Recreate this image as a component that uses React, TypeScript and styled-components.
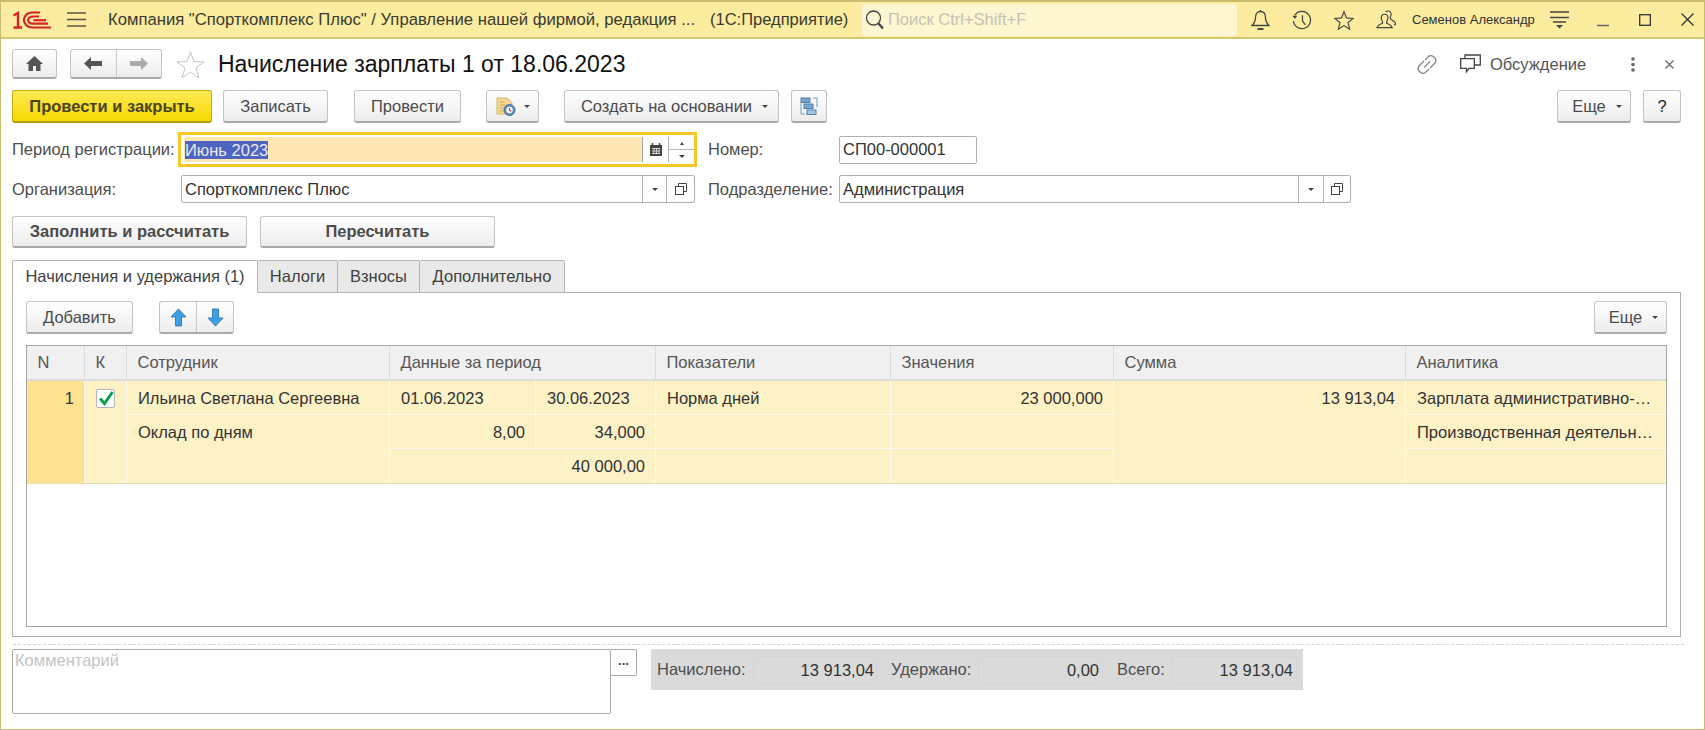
import React from "react";
import styled, { createGlobalStyle } from "styled-components";

const Global = createGlobalStyle`
  html, body { margin: 0; padding: 0; background: #fff; }
  body { font-family: "Liberation Sans", Arial, sans-serif; font-size: 16.5px; color: #333; }
  * { box-sizing: border-box; }
`;

const Root = styled.div`
  width: 1705px; height: 730px; overflow: hidden; background: #fff;
  border: 1px solid #c9bc6e; border-top-width: 2px;
  display: flex; flex-direction: column;
`;
const TopBar = styled.header`
  height: 37px; flex: none; background: #fbec9f; border-bottom: 2px solid #d4c670;
  display: flex; align-items: center; color: #333;
`;
const LogoBox = styled.div`margin-left: 12px; width: 38px; height: 18px; display: flex;`;
const Burger = styled.div`margin-left: 16px; display: flex;`;
const AppTitle = styled.div`margin-left: 22px; width: 589px; font-size: 16.67px; white-space: nowrap; color: #3a3a30;`;
const AppKind = styled.div`margin-left: 13px; width: 139px; font-size: 16.5px; white-space: nowrap; color: #3a3a30;`;
const SearchBox = styled.div`
  margin-left: 13px; width: 375px; height: 32px; background: #fdf6d0; border-radius: 3px;
  display: flex; align-items: center; padding-left: 3px; color: #c5c3b4; font-size: 16.5px; gap: 3px;
`;
const TopIcon = styled.div<{ $ml: number; $w?: number }>`
  margin-left: ${(p) => p.$ml}px; width: ${(p) => p.$w ?? 20}px; display: flex; justify-content: center; align-items: center;
`;
const UserName = styled.div`margin-left: 16px; width: 124px; font-size: 13px; white-space: nowrap; color: #333;`;

const Form = styled.main`flex: 1; display: flex; flex-direction: column; padding: 0 23px 0 11px; min-height: 0;`;
const TitleRow = styled.div`margin-top: 10px; height: 30px; display: flex; align-items: center;`;
const Btn = styled.button<{ $w: number; $ml?: number; $primary?: boolean; $bold?: boolean; $h?: number; $dark?: boolean }>`
  width: ${(p) => p.$w}px; height: ${(p) => p.$h ?? 33}px; margin-left: ${(p) => p.$ml ?? 0}px; flex: none; padding: 0;
  display: inline-flex; align-items: center; justify-content: center; gap: 8px;
  font-family: "Liberation Sans", Arial, sans-serif; font-size: 16.5px;
  font-weight: ${(p) => (p.$primary || p.$bold ? 700 : 400)};
  color: ${(p) => (p.$primary ? "#4a4320" : p.$dark ? "#222" : "#4b4b4b")};
  border-radius: 3px;
  border: 1px solid ${(p) => (p.$primary ? "#c8ab0c" : "#c4c4c4")};
  border-bottom: 2px solid ${(p) => (p.$primary ? "#b49a10" : "#a9a9a9")};
  background: ${(p) => (p.$primary ? "linear-gradient(#ffea55, #f6d800)" : "linear-gradient(#ffffff, #ececec)")};
`;
const MenuBtn = styled(Btn)`gap: 10px; padding-left: 6px;`;
const SegGroup = styled.div<{ $w: number; $ml?: number; $h: number }>`
  width: ${(p) => p.$w}px; height: ${(p) => p.$h}px; margin-left: ${(p) => p.$ml ?? 0}px; flex: none; display: flex;
  border-radius: 3px; border: 1px solid #c4c4c4; border-bottom: 2px solid #a9a9a9;
  background: linear-gradient(#ffffff, #ececec);
`;
const SegItem = styled.div`
  flex: 1; display: flex; align-items: center; justify-content: center;
  & + & { border-left: 1px solid #c9c9c9; }
`;
const StarBox = styled.div`margin-left: 14px; width: 29px; display: flex;`;
const Title = styled.h1`margin: 0 0 0 13px; font-size: 23px; font-weight: 400; color: #111; white-space: nowrap;`;
const TitleRight = styled.div`margin-left: auto; display: flex; align-items: center; color: #4a5a6a;`;
const Discuss = styled.span`margin-left: 9px; width: 99px; font-size: 16.5px; white-space: nowrap; color: #555;`;

const CommandBar = styled.div`margin-top: 11px; height: 33px; display: flex; flex: none;`;
const Caret = styled.span`
  width: 0; height: 0; border-left: 3px solid transparent; border-right: 3px solid transparent; border-top: 3px solid #444; flex: none;
`;
const Push = styled.div`margin-left: auto; display: flex;`;

const FieldRow = styled.div<{ $mt: number; $h: number }>`
  margin-top: ${(p) => p.$mt}px; height: ${(p) => p.$h}px; display: flex; align-items: center; flex: none;
`;
const Label = styled.label<{ $w: number; $ml?: number }>`
  width: ${(p) => p.$w}px; margin-left: ${(p) => p.$ml ?? 0}px; flex: none; font-size: 16.5px; color: #4e4e4e; white-space: nowrap;
`;
const FocusField = styled.div`
  width: 519px; height: 35px; flex: none; border: 3px solid #f7c726; padding: 2px 0 2px 3px; display: flex; background: #fff;
`;
const FocusInput = styled.div`
  flex: 1; background: #fde6b2; display: flex; align-items: center; padding-left: 1px; border-right: 1px solid #a8a8a8;
`;
const Selected = styled.span`background: #4f64c0; color: #e8e8f4; font-size: 16.5px; line-height: 18px;`;
const FieldBtn = styled.div<{ $w: number; $sep?: boolean }>`
  width: ${(p) => p.$w}px; flex: none; display: flex; align-items: center; justify-content: center;
  border-left: ${(p) => (p.$sep ? "1px solid #b0b0b0" : "none")};
`;
const Spin = styled.div`
  width: 26px; flex: none; display: flex; flex-direction: column; border-left: 1px solid #b0b0b0;
`;
const SpinPart = styled.div<{ $top?: boolean }>`
  flex: 1; display: flex; align-items: center; justify-content: center;
  border-bottom: ${(p) => (p.$top ? "1px solid #b8b8b8" : "none")};
`;
const CaretUp = styled.span`
  width: 0; height: 0; border-left: 2.5px solid transparent; border-right: 2.5px solid transparent; border-bottom: 3px solid #444;
`;
const Input = styled.div<{ $w: number }>`
  width: ${(p) => p.$w}px; height: 28px; flex: none; border: 1px solid #b0b0b0; border-radius: 2px; display: flex; background: #fff;
`;
const InputText = styled.div`flex: 1; display: flex; align-items: center; padding-left: 3px; font-size: 16.5px; color: #333;`;

const Tabs = styled.nav`margin-top: 12px; height: 32px; flex: none; display: flex; align-items: stretch;`;
const Tab = styled.div<{ $w: number; $active?: boolean }>`
  width: ${(p) => p.$w}px; display: flex; align-items: center; justify-content: center; font-size: 16.5px; color: #3f3f3f;
  border: 1px solid #b4b4b4; border-left-width: ${(p) => (p.$active ? 1 : 0)}px;
  border-radius: 2px 2px 0 0;
  border-bottom: ${(p) => (p.$active ? "1px solid #fff" : "1px solid #b4b4b4")};
  background: ${(p) => (p.$active ? "#fff" : "#e9e9e9")};
  margin-bottom: -1px; position: relative;
`;
const Panel = styled.section`
  height: 345px; flex: none; border: 1px solid #b0b0b0; padding: 8px 13px 0 13px; display: flex; flex-direction: column;
`;
const PanelBar = styled.div`height: 33px; flex: none; display: flex;`;
const Table = styled.div`
  margin-top: 11px; height: 282px; flex: none; border: 1px solid #a4a4a4; display: flex; flex-direction: column;
`;
const cols = "58px 42px 263px 146px 120px 235px 223px 292px 1fr";
const HeadRow = styled.div`
  display: grid; grid-template-columns: ${cols}; height: 35px; flex: none; background: #f0f0f0; border-bottom: 2px solid #dcdcdc;
`;
const HeadCell = styled.div<{ $span?: number }>`
  grid-column: span ${(p) => p.$span ?? 1}; display: flex; align-items: center; padding-left: 10.5px; font-size: 16.5px; color: #555;
  border-right: 1px solid #dcdcdc; &:last-child { border-right: 0; }
`;
const Body = styled.div`
  display: grid; grid-template-columns: ${cols}; grid-template-rows: 34px 34px 34px; background: #fdf1c6; border-bottom: 1px solid #e6ddb4;
`;
const Cell = styled.div<{ $col: number; $row: number; $cspan?: number; $rspan?: number; $right?: boolean; $tone?: boolean; $noLine?: boolean }>`
  grid-column: ${(p) => p.$col} / span ${(p) => p.$cspan ?? 1};
  grid-row: ${(p) => p.$row} / span ${(p) => p.$rspan ?? 1};
  display: flex; align-items: flex-start; padding: 8px 10px 0 11px; font-size: 16.5px; color: #333; white-space: nowrap; overflow: hidden;
  justify-content: ${(p) => (p.$right ? "flex-end" : "flex-start")};
  background: ${(p) => (p.$tone ? "#fde28f" : "transparent")};
  border-right: 1px solid #fffaf0;
  border-bottom: ${(p) => (p.$noLine ? "0" : "1px solid #fffaf0")};
`;
const CheckBox = styled.div`
  width: 19px; height: 19px; margin: 0; border: 1px solid #b4b4b4; border-radius: 2px; background: #fff; display: flex; align-items: center; justify-content: center;
`;

const Dashed = styled.div`margin-top: 7px; height: 1px; flex: none; width: 1671px; margin-left: 1px; border-top: 1px dashed #d5d5d5;`;
const Bottom = styled.div`margin-top: 4px; display: flex; align-items: flex-start; flex: none;`;
const Comment = styled.div`
  width: 599px; height: 65px; flex: none; border: 1px solid #a8a8a8; border-radius: 2px; padding: 1px 2px; font-size: 16.5px; color: #c4c4c4;
`;
const MoreBtn = styled.div`
  width: 26px; height: 27px; flex: none; border: 1px solid #a8a8a8; border-left: 0; border-radius: 0 2px 2px 0; font-size: 13px; font-weight: 700; color: #444;
  display: flex; justify-content: center; align-items: center; letter-spacing: 0; padding-bottom: 4px;
`;
const Totals = styled.div`
  margin-left: 14px; width: 652px; height: 41px; flex: none; background: #dadada; display: flex; align-items: center; padding-left: 6px;
`;
const TotalLabel = styled.span<{ $w: number; $pl?: number }>`
  width: ${(p) => p.$w}px; padding-left: ${(p) => p.$pl ?? 0}px; flex: none; font-size: 16.5px; color: #4e4e4e; white-space: nowrap;
`;
const TotalValue = styled.span`
  width: 125px; height: 28px; flex: none; margin-top: 1px; border: 1px solid #d4d4d4; border-radius: 3px; display: flex; align-items: center; justify-content: flex-end; padding-right: 3px; font-size: 16.5px; color: #333;
`;

const Logo1C = () => (
  <svg width="38" height="18" viewBox="0 0 38 18" fill="none" stroke="#d8232a" strokeWidth="2.2">
    <path d="M0.5 4.500 L5 2 V15.500 M0.500 16.500 H9" strokeWidth="2.400" />
    <path d="M27 1.500 H19.500 C13.500 1.500 11 5.500 11 9 C11 13 14 16.500 19.500 16.500 H38" />
    <path d="M26 5.500 H20.500 C17 5.500 15.200 7.200 15.200 9.200 C15.200 11.300 17 12.700 20.500 12.700 H35" />
    <path d="M20.500 9.200 H33" />
  </svg>
);
const HamIcon = () => (
  <svg width="19" height="15" viewBox="0 0 19 15" stroke="#55553f" strokeWidth="1.3"><path d="M0 1h19M0 7.500h19M0 14h19" /></svg>
);
const SearchIcon = () => (
  <svg width="20" height="22" viewBox="0 0 20 22" fill="none" stroke="#444"><circle cx="8.500" cy="9" r="7" strokeWidth="1.3" /><path d="M13.500 14.500l4.500 5" strokeWidth="2.400" /></svg>
);
const BellIcon = () => (
  <svg width="19" height="22" viewBox="0 0 19 22" fill="none" stroke="#444" strokeWidth="1.3"><path d="M9.500 2.500c3.500 0 5 3 5 6 0 4 1 5.500 3.500 8H1c2.500-2.500 3.500-4 3.500-8 0-3 1.500-6 5-6zM9.500 1v1.500" /><path d="M6.500 20h6" strokeWidth="2" /></svg>
);
const HistoryIcon = () => (
  <svg width="21" height="22" viewBox="0 0 21 22" fill="none" stroke="#444" strokeWidth="1.300"><path d="M3 6a9 9 0 1 1-1.500 6M11 6v6l3 4" /><path d="M.5 6.500h5L3 10z" fill="#444" stroke="none" /></svg>
);
const StarTop = () => (
  <svg width="22" height="22" viewBox="0 0 24 24" fill="none" stroke="#444" strokeWidth="1.400"><path d="M12 2l3 7.500 8 .6-6.200 5 2 7.900L12 18.700 5.200 23l2-7.900L1 10.100l8-.6z" /></svg>
);
const UsersIcon = () => (
  <svg width="21" height="22" viewBox="0 0 21 22" fill="none" stroke="#444" strokeWidth="1.200"><path d="M9 5c2.500 0 3.500 2 3.500 4S11 12.500 11 14c1 1.500 5 1.500 6 5H1c1-3.500 5-3.500 6-5 0-1.500-1.500-3-1.500-5S6.500 5 9 5z" /><path d="M10 2.500C11.500 1 15 1 15.800 4c.5 2-1 3.500-1 5s2.700 1.500 5 4.500-1 2.500-1 2.500" /></svg>
);
const MenuIcon = () => (
  <svg width="19" height="19" viewBox="0 0 19 19"><path d="M0 2h19M0 7.500h19M3 12h13" stroke="#444" strokeWidth="1.300" /><path d="M6 15h7l-3.500 3.500z" fill="#444" /></svg>
);
const WinMin = () => <svg width="12" height="14" viewBox="0 0 12 14"><path d="M0 12.500h12" stroke="#666" strokeWidth="1.500" /></svg>;
const WinMax = () => <svg width="12" height="12" viewBox="0 0 12 12" fill="none"><rect x=".7" y=".7" width="10.600" height="10.600" stroke="#333" strokeWidth="1.300" /></svg>;
const WinClose = () => <svg width="13" height="13" viewBox="0 0 13 13"><path d="M.5.500l12 12M12.500.500l-12 12" stroke="#333" strokeWidth="1.300" /></svg>;
const HomeIcon = () => (
  <svg width="17" height="15" viewBox="0 0 17 15" fill="#555"><path d="M8.500 0L17 8h-2.500v7H10V10H7v5H2.500V8H0z" /></svg>
);
const ArrowIcon = ({ dir, c }: { dir: "l" | "r"; c: string }) => (
  <svg width="18" height="13" viewBox="0 0 18 13" fill={c}>
    <path d={dir === "l" ? "M0 6.500L7 0v4h11v5H7v4z" : "M18 6.500L11 0v4H0v5h11v4z"} />
  </svg>
);
const BigStar = () => (
  <svg width="29" height="27" viewBox="0 0 29 27" fill="none" stroke="#c4c4c4" strokeWidth="1"><path d="M14.500 1l3.400 9.600 10.100.3-8 6.200 2.900 9.700-8.400-5.700-8.400 5.700 2.900-9.700-8-6.200 10.100-.3z" /></svg>
);
const LinkIcon = () => (
  <svg width="20" height="19" viewBox="0 0 20 19" fill="none" stroke="#8a8a8a" strokeWidth="1.400"><path d="M8 5l3.500-3.500c2-1.500 4.500-.5 6 1s2 3.500.5 5.500L13 13" /><path d="M12 14l-3.500 3.500c-2 1.500-4.500.5-6-1s-2-3.500-.5-5.500L7 6" /><path d="M7 12.500L13 6.500" /></svg>
);
const DiscussIcon = () => (
  <svg width="21" height="20" viewBox="0 0 21 20" fill="none" stroke="#444" strokeWidth="1.300"><path d="M.7 4.700h13.600v9.600H9l-2.500 3.500v-3.500H.7z" /><path d="M5 4.500V1h15.300v10H14.500" /></svg>
);
const Dots = () => (
  <svg width="6" height="15" viewBox="0 0 6 15" fill="#666"><circle cx="3" cy="2" r="1.800" /><circle cx="3" cy="7.500" r="1.800" /><circle cx="3" cy="13" r="1.800" /></svg>
);
const SmallX = () => <svg width="9" height="9" viewBox="0 0 9 9"><path d="M.5.500l8 8M8.500.500l-8 8" stroke="#666" strokeWidth="1.300" /></svg>;
const DocClock = () => (
  <svg width="20" height="19" viewBox="0 0 20 19">
    <path d="M1 1h10l5 5v11H1z" fill="#f3d98f" stroke="#d4b665" />
    <path d="M3.500 5h5M3.500 8h7M3.500 11h4M3.500 14h4" stroke="#cfae5b" />
    <circle cx="13.500" cy="13" r="5.500" fill="#5f8dc4" stroke="#3f6ea5" />
    <circle cx="13.500" cy="13" r="3.200" fill="#fff" />
    <path d="M13.500 11v2.300l1.800 1" stroke="#c94040" strokeWidth="1.200" fill="none" />
  </svg>
);
const StructIcon = () => (
  <svg width="18" height="18" viewBox="0 0 18 18" fill="none">
    <path d="M1 6v11h4M13 1h4v9" stroke="#6f9bc4" />
    <rect x="1" y="1" width="9" height="4.500" fill="#7ba5cc" stroke="#4f7ea9" />
    <rect x="4" y="7" width="9" height="4.500" fill="#7ba5cc" stroke="#4f7ea9" />
    <rect x="7" y="13" width="9" height="4.500" fill="#a7c5e0" stroke="#4f7ea9" />
  </svg>
);
const CalendarIcon = () => (
  <svg width="12" height="13" viewBox="0 0 12 13"><path d="M0 2h12v11H0z" fill="#444" /><path d="M2.500 0v3M9.500 0v3" stroke="#444" strokeWidth="1.500" /><path d="M2 5.500h8M2 8h8M2 10.500h8M4 5v6M6.500 5v6M9 5v6" stroke="#eee" strokeWidth=".8" /></svg>
);
const BlueArrow = ({ up }: { up?: boolean }) => (
  <svg width="17" height="19" viewBox="0 0 17 19" fill="#3da0e6" stroke="#1f6fa8" strokeWidth=".8">
    <path d={up ? "M8.500 1L16 9h-4.500v9h-6V9H1z" : "M8.500 18L16 10h-4.500V1h-6v9H1z"} />
  </svg>
);
const Check = () => (
  <svg width="16" height="15" viewBox="0 0 16 15" fill="none"><path d="M2 7.500L6.500 12.500 14.500 1" stroke="#0c9c50" strokeWidth="3" /></svg>
);
const OpenIcon = () => (
  <svg width="12" height="12" viewBox="0 0 12 12" fill="none" stroke="#444"><rect x=".5" y="3.500" width="8" height="8" /><path d="M3.500 3V.5h8v8H9" /></svg>
);

export default function App() {
  return (
    <>
      <Global />
      <Root>
        <TopBar>
          <LogoBox><Logo1C /></LogoBox>
          <Burger><HamIcon /></Burger>
          <AppTitle>Компания "Спорткомплекс Плюс" / Управление нашей фирмой, редакция ...</AppTitle>
          <AppKind>(1С:Предприятие)</AppKind>
          <SearchBox><SearchIcon />Поиск Ctrl+Shift+F</SearchBox>
          <TopIcon $ml={13}><BellIcon /></TopIcon>
          <TopIcon $ml={22}><HistoryIcon /></TopIcon>
          <TopIcon $ml={22}><StarTop /></TopIcon>
          <TopIcon $ml={22}><UsersIcon /></TopIcon>
          <UserName>Семенов Александр</UserName>
          <TopIcon $ml={14} $w={19}><MenuIcon /></TopIcon>
          <TopIcon $ml={28} $w={12}><WinMin /></TopIcon>
          <TopIcon $ml={30} $w={12}><WinMax /></TopIcon>
          <TopIcon $ml={30} $w={13}><WinClose /></TopIcon>
        </TopBar>
        <Form>
          <TitleRow>
            <SegGroup $w={45} $h={30}><SegItem><HomeIcon /></SegItem></SegGroup>
            <SegGroup $w={92} $h={30} $ml={13}>
              <SegItem><ArrowIcon dir="l" c="#555" /></SegItem>
              <SegItem><ArrowIcon dir="r" c="#aaa" /></SegItem>
            </SegGroup>
            <StarBox><BigStar /></StarBox>
            <Title>Начисление зарплаты 1 от 18.06.2023</Title>
            <TitleRight>
              <LinkIcon />
              <TopIcon $ml={23} $w={21}><DiscussIcon /></TopIcon>
              <Discuss>Обсуждение</Discuss>
              <TopIcon $ml={41} $w={6}><Dots /></TopIcon>
              <TopIcon $ml={29} $w={9}><SmallX /></TopIcon>
              <TopIcon $ml={4} $w={3} />
            </TitleRight>
          </TitleRow>
          <CommandBar>
            <Btn $w={200} $primary>Провести и закрыть</Btn>
            <Btn $w={105} $ml={11}>Записать</Btn>
            <Btn $w={107} $ml={26}>Провести</Btn>
            <Btn $w={53} $ml={25}><DocClock /><Caret /></Btn>
            <MenuBtn $w={215} $ml={25}>Создать на основании<Caret /></MenuBtn>
            <Btn $w={36} $ml={12}><StructIcon /></Btn>
            <Push>
              <MenuBtn $w={74}>Еще<Caret /></MenuBtn>
              <Btn $w={38} $ml={12} $dark>?</Btn>
            </Push>
          </CommandBar>
          <FieldRow $mt={9} $h={35}>
            <Label $w={166}>Период регистрации:</Label>
            <FocusField>
              <FocusInput><Selected>Июнь 2023</Selected></FocusInput>
              <FieldBtn $w={25}><CalendarIcon /></FieldBtn>
              <Spin><SpinPart $top><CaretUp /></SpinPart><SpinPart><Caret /></SpinPart></Spin>
            </FocusField>
            <Label $w={131} $ml={11}>Номер:</Label>
            <Input $w={138}><InputText>СП00-000001</InputText></Input>
          </FieldRow>
          <FieldRow $mt={8} $h={28}>
            <Label $w={169}>Организация:</Label>
            <Input $w={514}>
              <InputText>Спорткомплекс Плюс</InputText>
              <FieldBtn $w={24} $sep><Caret /></FieldBtn>
              <FieldBtn $w={28} $sep><OpenIcon /></FieldBtn>
            </Input>
            <Label $w={131} $ml={13}>Подразделение:</Label>
            <Input $w={512}>
              <InputText>Администрация</InputText>
              <FieldBtn $w={25} $sep><Caret /></FieldBtn>
              <FieldBtn $w={27} $sep><OpenIcon /></FieldBtn>
            </Input>
          </FieldRow>
          <FieldRow $mt={13} $h={32}>
            <Btn $w={235} $h={32} $bold>Заполнить и рассчитать</Btn>
            <Btn $w={235} $h={32} $ml={13} $bold>Пересчитать</Btn>
          </FieldRow>
          <Tabs>
            <Tab $w={246} $active>Начисления и удержания (1)</Tab>
            <Tab $w={80}>Налоги</Tab>
            <Tab $w={82}>Взносы</Tab>
            <Tab $w={145}>Дополнительно</Tab>
          </Tabs>
          <Panel>
            <PanelBar>
              <Btn $w={107}>Добавить</Btn>
              <SegGroup $w={75} $h={33} $ml={26}>
                <SegItem><BlueArrow up /></SegItem>
                <SegItem><BlueArrow /></SegItem>
              </SegGroup>
              <Push><MenuBtn $w={73}>Еще<Caret /></MenuBtn></Push>
            </PanelBar>
            <Table>
              <HeadRow>
                <HeadCell>N</HeadCell>
                <HeadCell>К</HeadCell>
                <HeadCell>Сотрудник</HeadCell>
                <HeadCell $span={2}>Данные за период</HeadCell>
                <HeadCell>Показатели</HeadCell>
                <HeadCell>Значения</HeadCell>
                <HeadCell>Сумма</HeadCell>
                <HeadCell>Аналитика</HeadCell>
              </HeadRow>
              <Body>
                <Cell $col={1} $row={1} $rspan={3} $right $tone $noLine>1</Cell>
                <Cell $col={2} $row={1} $rspan={3} $noLine><CheckBox><Check /></CheckBox></Cell>
                <Cell $col={3} $row={1}>Ильина Светлана Сергеевна</Cell>
                <Cell $col={3} $row={2} $rspan={2} $noLine>Оклад по дням</Cell>
                <Cell $col={4} $row={1}>01.06.2023</Cell>
                <Cell $col={5} $row={1}>30.06.2023</Cell>
                <Cell $col={4} $row={2} $right>8,00</Cell>
                <Cell $col={5} $row={2} $right>34,000</Cell>
                <Cell $col={4} $row={3} $cspan={2} $right $noLine>40 000,00</Cell>
                <Cell $col={6} $row={1}>Норма дней</Cell>
                <Cell $col={6} $row={2} />
                <Cell $col={6} $row={3} $noLine />
                <Cell $col={7} $row={1} $right>23 000,000</Cell>
                <Cell $col={7} $row={2} />
                <Cell $col={7} $row={3} $noLine />
                <Cell $col={8} $row={1} $rspan={3} $right $noLine>13 913,04</Cell>
                <Cell $col={9} $row={1}>Зарплата административно-…</Cell>
                <Cell $col={9} $row={2}>Производственная деятельн…</Cell>
                <Cell $col={9} $row={3} $noLine />
              </Body>
            </Table>
          </Panel>
          <Dashed />
          <Bottom>
            <Comment>Комментарий</Comment>
            <MoreBtn>...</MoreBtn>
            <Totals>
              <TotalLabel $w={96}>Начислено:</TotalLabel>
              <TotalValue>13 913,04</TotalValue>
              <TotalLabel $w={100} $pl={13}>Удержано:</TotalLabel>
              <TotalValue>0,00</TotalValue>
              <TotalLabel $w={69} $pl={14}>Всего:</TotalLabel>
              <TotalValue>13 913,04</TotalValue>
            </Totals>
          </Bottom>
        </Form>
      </Root>
    </>
  );
}
